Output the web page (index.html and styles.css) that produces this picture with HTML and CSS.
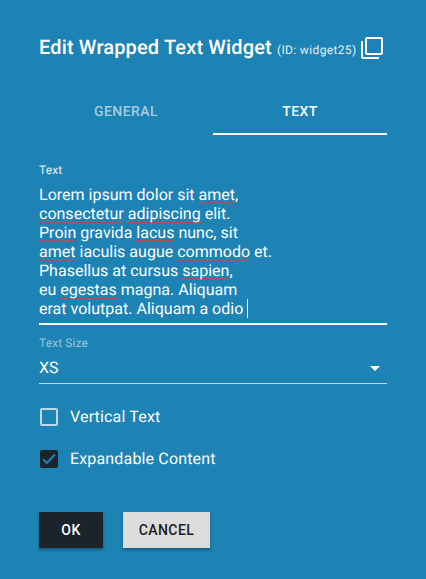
FILE: index.html
```html
<!DOCTYPE html>
<html lang="en">
<head>
<meta charset="utf-8">
<title>Edit Wrapped Text Widget</title>
<link rel="stylesheet" href="styles.css">
</head>
<body>
<main class="panel">
  <header class="header">
    <h1 class="title">Edit Wrapped Text Widget</h1>
    <span class="widget-id">(ID: widget25)</span>
    <svg class="copy-icon" viewBox="0 0 24 24"><path fill="currentColor" d="M3 5H1v16c0 1.1.9 2 2 2h16v-2H3V5zm18-4H7c-1.1 0-2 .9-2 2v14c0 1.1.9 2 2 2h14c1.1 0 2-.9 2-2V3c0-1.1-.9-2-2-2zm0 16H7V3h14v14z"/></svg>
  </header>
  <nav class="tabs">
    <div class="tab">GENERAL</div>
    <div class="tab active">TEXT</div>
  </nav>
  <label class="label">Text</label>
  <div class="textarea">
    <div>Lorem ipsum dolor sit <span class="miss">amet</span>,</div>
    <div><span class="miss">consectetur</span> <span class="miss">adipiscing</span> elit.</div>
    <div><span class="miss">Proin</span> gravida <span class="miss">lacus</span> nunc, sit</div>
    <div><span class="miss">amet</span> iaculis augue <span class="miss">commodo</span> et.</div>
    <div>Phasellus at cursus <span class="miss">sapien</span>,</div>
    <div>eu <span class="miss">egestas</span> magna. Aliquam</div>
    <div class="last">erat volutpat. Aliquam a odio <span class="caret"></span></div>
  </div>
  <label class="label dim">Text Size</label>
  <div class="select"><span>XS</span><svg class="arrow" viewBox="0 0 10 5"><path fill="currentColor" d="M0 0h10L5 5z"/></svg></div>
  <div class="check"><span class="box"></span><span class="check-text">Vertical Text</span></div>
  <div class="check second"><span class="box checked"><svg viewBox="0 0 18 18"><path d="M3 9.2l3.8 3.8L15 4.5"/></svg></span><span class="check-text">Expandable Content</span></div>
  <footer class="actions">
    <button class="button ok">OK</button>
    <button class="button cancel">CANCEL</button>
  </footer>
</main>
</body>
</html>
```
FILE: styles.css
```css
* { box-sizing: border-box; }
body {
  margin: 0;
  background: #1d82b4;
  color: #fff;
  font-family: Roboto, "Liberation Sans", sans-serif;
  text-rendering: geometricPrecision;
}
.panel { width: 426px; height: 579px; padding: 35px 39px 0; overflow: hidden; }
.header { display: flex; align-items: center; height: 26px; white-space: nowrap; }
.title { margin: 0 0 2px; font-size: 20px; font-weight: 500; letter-spacing: 0.15px; line-height: 24px; }
.widget-id { margin: 4px 0 0 5px; font-size: 12px; letter-spacing: 0.36px; color: #e0eef5; }
.copy-icon { flex: none; width: 24px; height: 24px; margin-left: 3px; }
.tabs { display: flex; margin-top: 26px; height: 48px; }
.tab {
  flex: 1;
  text-align: center;
  font-size: 14px;
  font-weight: 500;
  line-height: 50px;
  letter-spacing: 0.45px;
  color: #a5cde1;
}
.active { color: #fff; border-bottom: 2px solid #fff; }
.label { display: block; margin-top: 28px; height: 14px; font-size: 12px; line-height: 14px; letter-spacing: 0.1px; color: #e8f3f8; }
.textarea {
  margin-top: 8px;
  height: 140px;
  border-bottom: 2px solid #fff;
  font-size: 16px;
  line-height: 19px;
  letter-spacing: 0.01px;
  white-space: nowrap;
}
.miss {
  background: repeating-linear-gradient(90deg, #c5444f 0 2px, #84607d 2px 3px, #45729b 3px 4px) left bottom / 100% 2px no-repeat;
}
.last { display: flex; white-space: pre; }
.caret { width: 1px; height: 19px; background: #fff; }
.dim { margin-top: 11px; color: #98c6dd; }
.select {
  display: flex;
  align-items: center;
  justify-content: space-between;
  margin-top: 3px;
  height: 31px;
  padding: 0 7px 0 0;
  border-bottom: 1px solid #bbd9e8;
  font-size: 16px;
  line-height: 19px;
}
.select span { margin-bottom: 2px; }
.arrow { width: 10px; height: 5px; }
.check { display: flex; align-items: center; gap: 12px; height: 20px; margin: 23px 0 0 1px; font-size: 16px; letter-spacing: 0.16px; }
.check-text { line-height: 18px; }
.second { margin-top: 22px; }
.box { width: 18px; height: 18px; border: 2px solid #bbdae9; border-radius: 2px; }
.checked { border: 0; background: #1c242b; }
.checked svg { display: block; fill: none; stroke: #1d82b4; stroke-width: 2; }
.actions { display: flex; gap: 20px; margin-top: 43px; }
.button {
  height: 36px;
  padding: 0;
  border: 0;
  font: 500 14px/36px Roboto, sans-serif;
  letter-spacing: 0.4px;
  box-shadow: 0 2px 3px rgba(0,0,0,.3);
}
.ok { width: 64px; background: #1c242b; color: #fff; }
.cancel { width: 87px; background: #dcdcdc; color: #1c1c1c; }
```
